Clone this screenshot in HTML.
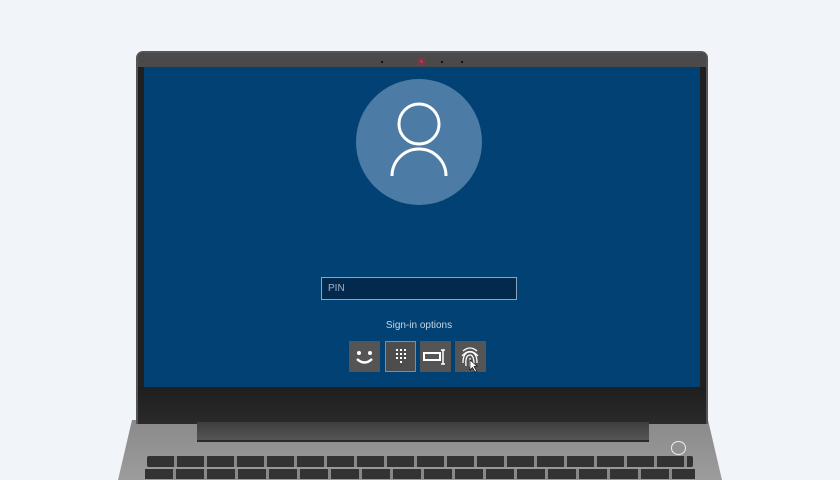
<!DOCTYPE html>
<html><head><style>
*{margin:0;padding:0;box-sizing:border-box}
body{width:840px;height:473px;background:#f1f5f9;position:relative;overflow:hidden;font-family:"Liberation Sans",sans-serif}
.a{position:absolute}
</style></head><body>
<!-- base -->
<div class="a" style="left:118px;top:420px;width:604px;height:60px;background:linear-gradient(#8a8a8a,#9c9c9c);clip-path:polygon(14px 0,590px 0,604px 60px,0 60px)"></div>
<!-- keys -->
<div class="a" style="left:146px;top:456px;width:548px;height:20px;display:flex;gap:3px;flex-wrap:wrap">
<script>/*none*/</script>
</div>
<div class="a" style="left:147px;top:456px;width:546px;height:11px;background:repeating-linear-gradient(90deg,#333 0 27px,#888 27px 30px);border-radius:2px"></div>
<div class="a" style="left:145px;top:469px;width:550px;height:10px;background:repeating-linear-gradient(90deg,#333 0 28px,#888 28px 31px)"></div>
<div class="a" style="left:671px;top:441px;width:15px;height:14px;border:1.5px solid #eee;border-radius:50%"></div>
<!-- lid -->
<div class="a" style="left:136px;top:51px;width:572px;height:373px;background:#202020;border-radius:7px 7px 0 0;border:2px solid #555;border-bottom:none"></div>
<div class="a" style="left:138px;top:53px;width:568px;height:14px;background:#4a4a4a;border-radius:5px 5px 0 0"></div>
<div class="a" style="left:417px;top:57px;width:9px;height:9px;border-radius:50%;background:#6a4048"></div>
<div class="a" style="left:420px;top:60px;width:3px;height:3px;border-radius:50%;background:#d03050"></div>
<div class="a" style="left:381px;top:61px;width:2px;height:2px;background:#111"></div>
<div class="a" style="left:441px;top:61px;width:2px;height:2px;background:#111"></div>
<div class="a" style="left:461px;top:61px;width:2px;height:2px;background:#111"></div>
<div class="a" style="left:144px;top:67px;width:556px;height:320px;background:#024173"></div>
<div class="a" style="left:138px;top:387px;width:568px;height:37px;background:linear-gradient(#1e1e1e,#2a2a2a)"></div>
<!-- hinge -->
<div class="a" style="left:197px;top:422px;width:452px;height:20px;background:linear-gradient(#3e3e3e,#555);border-bottom:2px solid #2a2a2a"></div>
<!-- avatar -->
<svg class="a" style="left:355px;top:78px" width="128" height="128">
<circle cx="64" cy="64" r="63" fill="#4c7ba5"/>
<circle cx="64" cy="46" r="20" fill="none" stroke="#fff" stroke-width="3"/>
<path d="M37 98 A27 27 0 0 1 91 98" fill="none" stroke="#fff" stroke-width="3"/>
</svg>
<div class="a" style="left:321px;top:277px;width:196px;height:23px;background:#03294c;border:1px solid #8ca5be;color:#9fb2c6;font-size:10px;line-height:21px;padding-left:6px">PIN</div>
<div class="a" style="left:344px;top:320px;width:150px;text-align:center;color:#c6d6e6;font-size:10px">Sign-in options</div>
<!-- buttons -->
<svg class="a" style="left:349px;top:341px" width="140" height="32">
<rect x="0" y="0" width="31" height="31" fill="#555"/>
<circle cx="10" cy="12" r="2" fill="#fff"/><circle cx="21" cy="12" r="2" fill="#fff"/>
<path d="M8 18 Q15.5 25 23 18" fill="none" stroke="#fff" stroke-width="2.5"/>
<rect x="36.5" y="0.5" width="30" height="30" fill="#4d4d4d" stroke="#8a8a8a"/>
<g fill="#fff"><rect x="47" y="8" width="2" height="2"/><rect x="51" y="8" width="2" height="2"/><rect x="55" y="8" width="2" height="2"/><rect x="47" y="12" width="2" height="2"/><rect x="51" y="12" width="2" height="2"/><rect x="55" y="12" width="2" height="2"/><rect x="47" y="16" width="2" height="2"/><rect x="51" y="16" width="2" height="2"/><rect x="55" y="16" width="2" height="2"/><rect x="51" y="20" width="2" height="2"/></g>
<rect x="71" y="0" width="31" height="31" fill="#555"/>
<rect x="75" y="12" width="16" height="7" fill="none" stroke="#fff" stroke-width="2"/>
<path d="M94 9v14M92 9h4M92 23h4" stroke="#fff" stroke-width="1.5" fill="none"/>
<rect x="106" y="0" width="31" height="31" fill="#555"/>
<g fill="none" stroke="#fff" stroke-width="1.3">
<path d="M114 10 Q121 4 128 10"/><path d="M113 15 Q121 6 129 15"/><path d="M114 22 Q114 11 121 11 Q128 11 128 22"/><path d="M117 25 Q116 14 121 14 Q125 14 125 24"/><path d="M121 17 V26"/></g>
<path d="M121 19 L121 29 L123.5 26.5 L126 31 L127.5 30 L125 25.5 L128 25 Z" fill="#fff" stroke="#000" stroke-width="0.6"/>
</svg>
</body></html>
